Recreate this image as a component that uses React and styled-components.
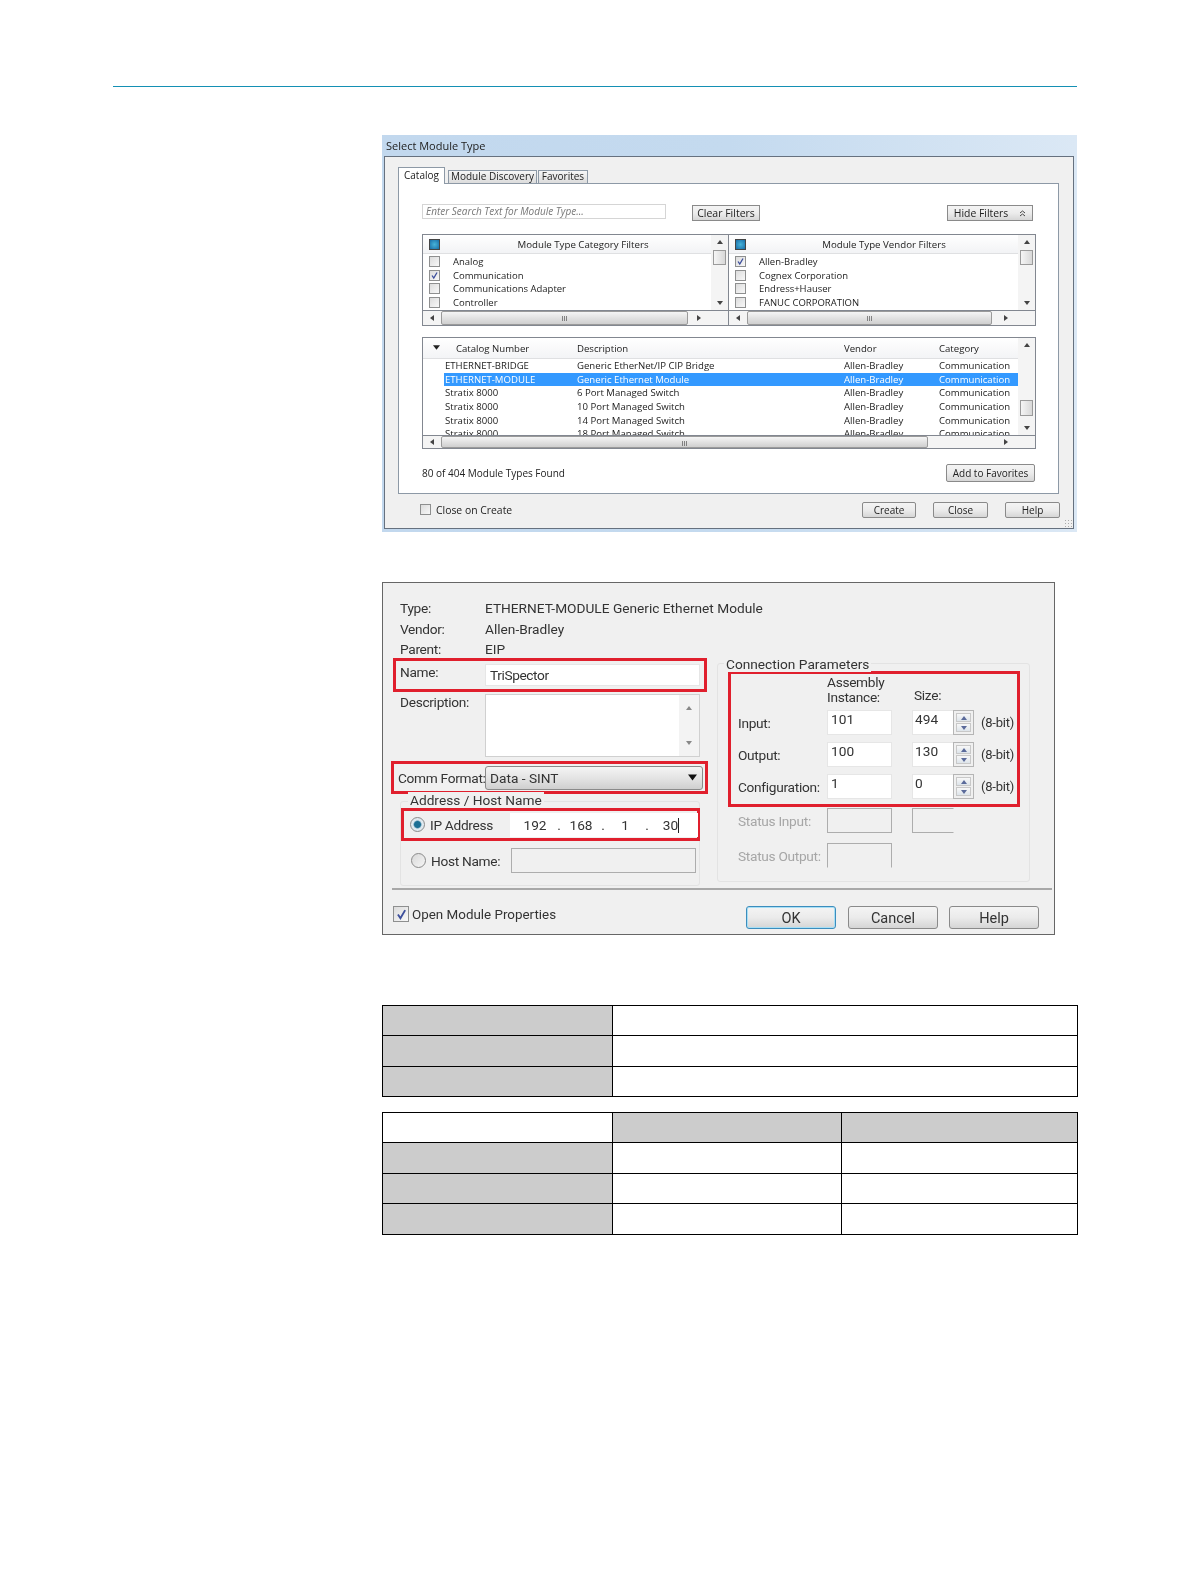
import { Fragment } from 'react';
import styled, { createGlobalStyle } from 'styled-components';

const GlobalStyle = createGlobalStyle`
    html, body {
        margin: 0;
        padding: 0;
        background: #ffffff;
    }
`;

const Page = styled.div`
    width: 1191px;
    height: 1584px;
    overflow: hidden;
    display: flex;
    flex-direction: column;
    font-family: "Open Sans", "Liberation Sans", sans-serif;
    color: #222;
`;

const Rule = styled.div`
    margin: 86px 114px 0 113px;
    height: 1px;
    background: #1490b4;
`;

const Content = styled.div`
    margin-left: 382px;
    width: 696px;
    display: flex;
    flex-direction: column;
`;

/* ---------- shared bits ---------- */

const Glyph = styled.svg`
    display: block;
    flex: none;
`;

const Tri = ({ dir = 'down', size = 6, color = '#444' }) => {
    const pts = {
        up: '3,1 6,5 0,5',
        down: '0,1 6,1 3,5',
        left: '5,0 5,6 1,3',
        right: '1,0 1,6 5,3',
    };
    return (
        <Glyph width={size} height={size} viewBox="0 0 6 6">
            <polygon points={pts[dir]} fill={color} />
        </Glyph>
    );
};

const CheckMark = ({ size = 11 }) => (
    <Glyph width={size} height={size} viewBox="0 0 11 11">
        <path d="M2.5 5.5 L4.6 8.6 L8.6 1.8" fill="none" stroke="#3d4f9c" strokeWidth="1.6" />
    </Glyph>
);

const DoubleChevron = () => (
    <Glyph width={7} height={7} viewBox="0 0 7 7">
        <path d="M1 3 L3.5 1 L6 3 M1 6 L3.5 4 L6 6" fill="none" stroke="#444" strokeWidth="1" />
    </Glyph>
);

const Box = styled.span`
    flex: none;
    width: ${(p) => p.$size || 11}px;
    height: ${(p) => p.$size || 11}px;
    box-sizing: border-box;
    border: 1px solid #8e8f8f;
    background: linear-gradient(135deg, #dcdcdc, #f8f8f8);
    display: flex;
    align-items: center;
    justify-content: center;
`;

/* ---------- first dialog ---------- */

const SelectDialog = styled.div`
    margin-top: 48px;
    width: 695px;
    height: 397px;
    display: flex;
    flex-direction: column;
    background: linear-gradient(90deg, #c2d8ee 0%, #c4daef 50%, #dbe8f5 100%);
    filter: blur(0.35px);
`;

const TitleBar = styled.div`
    height: 21px;
    padding-left: 4px;
    display: flex;
    align-items: center;
    font-size: 11px;
    color: #222;
`;

const Frame = styled.div`
    flex: 1;
    position: relative;
    margin: 0 3px 3px 2px;
    border: 1px solid #66717f;
    background: #f0f0f0;
    display: flex;
    flex-direction: column;
    padding: 11px 14px 0 13px;
    font-size: 10px;
`;

const TabRow = styled.div`
    display: flex;
    align-items: flex-end;
    height: 16px;
    position: relative;
    z-index: 1;
    margin-bottom: -1px;
    gap: 1px;
`;

const Tab = styled.div`
    box-sizing: border-box;
    width: ${(p) => p.$w}px;
    height: ${(p) => (p.$active ? 17 : 14)}px;
    margin-right: ${(p) => (p.$active ? 2 : 0)}px;
    padding-bottom: 2px;
    border: 1px solid #8d99a6;
    border-bottom: ${(p) => (p.$active ? 'none' : '1px solid #8d99a6')};
    background: ${(p) => (p.$active ? '#ffffff' : 'linear-gradient(#f6f6f6, #dcdcdc)')};
    display: flex;
    align-items: center;
    justify-content: center;
    font-size: 10px;
    white-space: nowrap;
`;

const TabPanel = styled.div`
    height: 311px;
    box-sizing: border-box;
    border: 1px solid #8d99a6;
    background: #ffffff;
    padding: 20px 22px 0 23px;
    display: flex;
    flex-direction: column;
`;

const Toolbar = styled.div`
    height: 16px;
    display: flex;
    align-items: center;
`;

const Search = styled.div`
    width: 244px;
    height: 15px;
    margin-bottom: 1px;
    box-sizing: border-box;
    border: 1px solid #d5d5d5;
    padding-left: 3px;
    font-style: italic;
    font-size: 10px;
    line-height: 13px;
    color: #777;
`;

const SmallButton = styled.div`
    flex: none;
    box-sizing: border-box;
    width: ${(p) => p.$w}px;
    height: ${(p) => p.$h || 16}px;
    margin-left: ${(p) => (p.$auto ? 'auto' : `${p.$ml || 0}px`)};
    margin-right: ${(p) => p.$mr || 0}px;
    border: 1px solid #8a8a8a;
    border-radius: ${(p) => p.$r || 0}px;
    background: linear-gradient(#f4f4f4 0%, #ececec 50%, #d6d6d6 100%);
    display: flex;
    align-items: center;
    justify-content: center;
    font-size: ${(p) => p.$fs || 10}px;
    white-space: nowrap;
`;

const ToolButton = styled(SmallButton)`
    margin-top: 2px;
    gap: 11px;
`;

const FilterGrid = styled.div`
    margin-top: 14px;
    height: 92px;
    box-sizing: border-box;
    border: 1px solid #828790;
    display: grid;
    grid-template-columns: 306px 1fr;
`;

const Pane = styled.div`
    display: grid;
    grid-template-columns: 1fr 17px;
    grid-template-rows: 1fr 15px;
    min-height: 0;
    min-width: 0;
    border-right: ${(p) => (p.$divider ? '1px solid #828790' : 'none')};
`;

const PaneBody = styled.div`
    overflow: hidden;
    min-height: 0;
`;

const PaneHead = styled.div`
    height: 18px;
    margin-bottom: 1px;
    display: flex;
    align-items: center;
    padding-left: 6px;
    background: linear-gradient(#ffffff, #f2f3f5);
    border-bottom: 1px solid #dfe0e2;
`;

const HeadText = styled.div`
    flex: 1;
    text-align: center;
    font-size: 9.7px;
    padding-left: ${(p) => p.$pl}px;
`;

const BlueBox = styled.span`
    flex: none;
    width: 11px;
    height: 11px;
    box-sizing: border-box;
    border: 1px solid #444;
    background: radial-gradient(#47b3d9, #1a6ea8);
`;

const FilterRow = styled.div`
    height: 13.6px;
    display: flex;
    align-items: center;
    gap: 13px;
    padding-left: 6px;
    white-space: nowrap;
    font-size: 9.5px;
`;

const VScroll = styled.div`
    background: #f4f4f4;
    display: flex;
    flex-direction: column;
    align-items: center;
    padding-top: 4px;
    position: relative;
`;

const VThumb = styled.div`
    position: absolute;
    left: 2px;
    right: 2px;
    top: ${(p) => p.$top}px;
    height: ${(p) => p.$h}px;
    border: 1px solid #9a9a9a;
    background: linear-gradient(90deg, #f5f5f5, #d8d8d8);
`;

const VArrow = styled.div`
    position: absolute;
    top: ${(p) => (p.$bottom ? 'auto' : '4px')};
    bottom: ${(p) => (p.$bottom ? '4px' : 'auto')};
`;

const HScroll = styled.div`
    grid-column: 1 / -1;
    background: #f4f4f4;
    border-top: 1px solid #828790;
    display: flex;
    align-items: center;
    padding: 0 26px 0 6px;
    gap: 6px;
`;

const HThumb = styled.div`
    width: ${(p) => p.$w}px;
    height: 100%;
    box-sizing: border-box;
    border: 1px solid #9a9a9a;
    border-radius: 2px;
    background: linear-gradient(#f5f5f5, #cfcfcf);
    text-align: center;
    font-size: 8px;
    line-height: 11px;
    color: #555;
`;

const ArrowEnd = styled.span`
    margin-left: auto;
`;

const CatalogList = styled.div`
    margin-top: 11px;
    height: 112px;
    box-sizing: border-box;
    border: 1px solid #828790;
    display: grid;
    grid-template-columns: 1fr 17px;
    grid-template-rows: 1fr 13px;
    font-size: 9.6px;
`;

const CatalogBody = styled.div`
    overflow: hidden;
    min-height: 0;
`;

const Columns = `
    display: grid;
    grid-template-columns: 128px 267px 95px 1fr;
`;

const CatalogHead = styled.div`
    ${Columns}
    height: 20px;
    padding-left: 22px;
    align-items: center;
    position: relative;
    background: linear-gradient(#ffffff, #f3f4f6);
    border-bottom: 1px solid #dfe0e2;
    font-size: 9.6px;
`;

const SortMark = styled.span`
    position: absolute;
    left: 10px;
    top: 6px;
`;

const HeadCell = styled.div`
    padding-left: ${(p) => p.$pl || 4}px;
`;

const CatalogRow = styled.div`
    ${Columns}
    height: 13.6px;
    margin-left: 21px;
    align-items: center;
    white-space: nowrap;
    padding-left: 1px;
    background: ${(p) => (p.$selected ? '#3399ff' : 'transparent')};
    color: ${(p) => (p.$selected ? '#ffffff' : '#222')};
`;

const StatusRow = styled.div`
    margin-top: 15px;
    height: 18px;
    display: flex;
    align-items: center;
    font-size: 10px;
`;

const Footer = styled.div`
    flex: 1;
    display: flex;
    align-items: center;
    padding: 0 0 3px 22px;
    margin-right: -1px;
    gap: 5px;
    font-size: 10.4px;
`;

const Grip = styled.span`
    position: absolute;
    right: 1px;
    bottom: 1px;
    width: 8px;
    height: 8px;
    background: radial-gradient(#aaa 35%, transparent 40%) 0 0 / 3px 3px;
`;

/* ---------- second dialog ---------- */

const PropsDialog = styled.div`
    margin-top: 50px;
    width: 673px;
    height: 353px;
    box-sizing: border-box;
    border: 1px solid #666;
    background: #f0f0f0;
    display: flex;
    flex-direction: column;
    font-family: Roboto, "Open Sans", sans-serif;
    font-size: 13.7px;
    color: #333;
    filter: blur(0.35px);
`;

const InfoBlock = styled.div`
    padding: 15px 0 0 17px;
    height: 60px;
    box-sizing: border-box;
    flex: none;
`;

const InfoRow = styled.div`
    display: flex;
    height: 20.5px;
    align-items: center;
`;

const LabelCol = styled.div`
    flex: none;
    width: ${(p) => p.$w || 85}px;
    margin-left: ${(p) => p.$ml || 0}px;
    margin-bottom: ${(p) => p.$mb || 0}px;
    white-space: nowrap;
    letter-spacing: -0.3px;
`;

const Columns2 = styled.div`
    flex: 1;
    display: flex;
    min-height: 0;
`;

const LeftCol = styled.div`
    width: 334px;
    padding-left: 10px;
    box-sizing: border-box;
    display: flex;
    flex-direction: column;
`;

const RedRow = styled.div`
    box-sizing: border-box;
    border: 3px solid #e01f2d;
    height: ${(p) => p.$h}px;
    width: ${(p) => p.$w}px;
    margin-left: ${(p) => p.$ml || 0}px;
    margin-top: ${(p) => p.$mt || 0}px;
    padding-left: ${(p) => p.$pl || 4}px;
    display: flex;
    align-items: center;
    flex: none;
`;

const Input = styled.div`
    box-sizing: border-box;
    width: ${(p) => p.$w}px;
    height: ${(p) => p.$h}px;
    background: ${(p) => (p.$disabled ? '#f0f0f0' : '#ffffff')};
    border: 1px solid ${(p) => (p.$disabled ? '#adadad' : '#e6e6e6')};
    border-right-color: ${(p) => (p.$openRight ? 'transparent' : undefined)};
    border-bottom-color: ${(p) => (p.$openBottom ? 'transparent' : undefined)};
    padding-left: ${(p) => p.$pl || 4}px;
    display: flex;
    align-items: ${(p) => p.$align || 'center'};
    flex: none;
    white-space: nowrap;
`;

const NameInput = styled(Input)`
    letter-spacing: -0.4px;
`;

const DescRow = styled.div`
    margin-top: 2px;
    padding-left: 7px;
    height: 63px;
    display: flex;
    flex: none;
`;

const DescLabel = styled(LabelCol)`
    line-height: 17px;
`;

const TextArea = styled.div`
    width: 215px;
    height: 63px;
    box-sizing: border-box;
    background: #ffffff;
    border: 1px solid #d0d0d0;
    display: flex;
    justify-content: flex-end;
`;

const AreaScroll = styled.div`
    width: 20px;
    background: #f3f3f3;
    display: flex;
    flex-direction: column;
    align-items: center;
    justify-content: space-between;
    padding: 10px 0;
`;

const Select = styled.div`
    box-sizing: border-box;
    width: 218px;
    height: 24px;
    border: 1px solid #8a8a8a;
    border-radius: 3px;
    background: linear-gradient(#f4f4f4, #e4e4e4 50%, #cfcfcf);
    padding: 0 5px 0 4px;
    display: flex;
    align-items: center;
    justify-content: space-between;
`;

const GroupLegend = styled.div`
    position: absolute;
    top: ${(p) => p.$top || -7}px;
    left: ${(p) => p.$left}px;
    padding: 0 2px;
    background: #f0f0f0;
    line-height: 16px;
    white-space: nowrap;
`;

const AddressGroup = styled.div`
    position: relative;
    margin: 7px 0 0 7px;
    width: 300px;
    height: 85px;
    box-sizing: border-box;
    border: 1px solid #e3e3e3;
    border-radius: 3px;
`;

const AddressBody = styled.div`
    position: relative;
    padding-top: 6px;
`;

const RadioDot = styled.span`
    flex: none;
    width: 15px;
    height: 15px;
    box-sizing: border-box;
    border-radius: 50%;
    border: 1px solid #8a8a8a;
    background: ${(p) => (p.$on
        ? 'radial-gradient(circle, #1c6f94 0 3px, #dfe9ef 4.5px)'
        : 'linear-gradient(135deg, #d8d8d8, #f6f6f6)')};
`;

const IpFields = styled.div`
    margin-left: auto;
    width: 188px;
    height: 24px;
    background: #fff;
    display: grid;
    grid-template-columns: 12px 26px 22px 22px 22px 22px 22px 26px;
    align-items: center;
    justify-items: center;
    margin-right: -1px;
`;

const Caret = styled.span`
    display: inline-block;
    width: 1px;
    height: 15px;
    background: #222;
    vertical-align: -3px;
`;

const HostRow = styled.div`
    display: flex;
    align-items: center;
    gap: 5px;
    margin-top: 7px;
    padding-left: 10px;
    height: 25px;
`;

const RightCol = styled.div`
    flex: 1;
    position: relative;
`;

const ConnGroup = styled.div`
    position: relative;
    margin: 20px 0 0 0;
    width: 313px;
    height: 219px;
    box-sizing: border-box;
    border: 1px solid #e3e3e3;
    border-radius: 3px;
`;

const RedGrid = styled.div`
    box-sizing: border-box;
    margin: 7px 0 0 10px;
    width: 292px;
    height: 136px;
    border: 3px solid #e01f2d;
    padding: 0 0 0 7px;
    display: grid;
    grid-template-columns: 89px 65px 20px 41px 21px auto;
    grid-template-rows: 29px 25px 25px 25px;
    row-gap: 7px;
    align-items: center;
`;

const HeaderCell = styled.div`
    grid-column: ${(p) => p.$col};
    line-height: 15px;
    align-self: start;
    margin-top: ${(p) => p.$mt || 0}px;
    padding-left: ${(p) => p.$pl || 0}px;
    white-space: nowrap;
    letter-spacing: -0.3px;
`;

const ParamLabel = styled.div`
    grid-column: 1;
    white-space: nowrap;
    letter-spacing: -0.3px;
`;

const Spinner = styled.div`
    box-sizing: border-box;
    width: 21px;
    height: 25px;
    border: 1px solid #b5b5b5;
    background: #f0f0f0;
    padding: 2px;
    display: flex;
    flex-direction: column;
    gap: 1px;
`;

const SpinBtn = styled.div`
    flex: 1;
    background: linear-gradient(#f8f8f8, #dde4ea);
    border: 1px solid #c8c8c8;
    display: flex;
    align-items: center;
    justify-content: center;
`;

const Unit = styled.div`
    padding-left: 7px;
    white-space: nowrap;
    font-size: 13px;
    letter-spacing: -0.2px;
`;

const StatusGrid = styled.div`
    margin: 1px 0 0 20px;
    display: grid;
    grid-template-columns: 89px 65px 20px 42px;
    grid-template-rows: 25px 25px;
    row-gap: 10px;
    align-items: center;
    white-space: nowrap;
    letter-spacing: -0.3px;
    color: #a6a6a6;
`;

const Divider = styled.div`
    flex: none;
    height: 2px;
    margin: 0 2px 0 9px;
    background: #a8a8a8;
`;

const DialogFooter = styled.div`
    flex: none;
    height: 44px;
    display: flex;
    padding: 0 15px 0 10px;
`;

const CheckLabel = styled.div`
    display: flex;
    align-items: center;
    gap: 3px;
    height: 24px;
    margin-top: 12px;
    font-size: 13.4px;
    white-space: nowrap;
`;

const WinButton = styled.div`
    flex: none;
    box-sizing: border-box;
    width: 90px;
    height: 23px;
    margin: 16px 0 0 ${(p) => (p.$auto ? 'auto' : `${p.$ml}px`)};
    padding-top: 2px;
    border: 1px solid ${(p) => (p.$primary ? '#3c8dbd' : '#8a8a8a')};
    box-shadow: ${(p) => (p.$primary ? 'inset 0 0 0 1px #a8dff5' : 'none')};
    border-radius: 3px;
    background: linear-gradient(#f4f4f4, #ebebeb 50%, #d5d5d5);
    display: flex;
    align-items: center;
    justify-content: center;
    font-size: 14.5px;
`;

/* ---------- blank tables ---------- */

const Table = styled.table`
    width: 696px;
    margin-top: ${(p) => p.$mt}px;
    border-collapse: collapse;
    table-layout: fixed;
`;

const Col = styled.col`
    width: ${(p) => p.$w}px;
`;

const Cell = styled.td`
    height: ${(p) => p.$h}px;
    padding: 0;
    border: 1px solid #000;
    background: ${(p) => (p.$grey ? '#cccccc' : '#ffffff')};
`;

const filters = [
    { head: 'Module Type Category Filters', pad: 15, items: [['Analog'], ['Communication', true], ['Communications Adapter'], ['Controller']], hthumb: 247 },
    { head: 'Module Type Vendor Filters', pad: 4, items: [['Allen-Bradley', true], ['Cognex Corporation'], ['Endress+Hauser'], ['FANUC CORPORATION']], hthumb: 245 },
];

const catalog = [
    ['ETHERNET-BRIDGE', 'Generic EtherNet/IP CIP Bridge', 'Allen-Bradley', 'Communication'],
    ['ETHERNET-MODULE', 'Generic Ethernet Module', 'Allen-Bradley', 'Communication', true],
    ['Stratix 8000', '6 Port Managed Switch', 'Allen-Bradley', 'Communication'],
    ['Stratix 8000', '10 Port Managed Switch', 'Allen-Bradley', 'Communication'],
    ['Stratix 8000', '14 Port Managed Switch', 'Allen-Bradley', 'Communication'],
    ['Stratix 8000', '18 Port Managed Switch', 'Allen-Bradley', 'Communication'],
];

const params = [
    ['Input:', '101', '494'],
    ['Output:', '100', '130'],
    ['Configuration:', '1', '0'],
];

function SpinField({ value }) {
    return (
        <>
            <Input $w={42} $h={25} $pl={2} $align="flex-start">{value}</Input>
            <Spinner>
                <SpinBtn><Tri dir="up" size={6} color="#5a6a9a" /></SpinBtn>
                <SpinBtn><Tri dir="down" size={6} color="#5a6a9a" /></SpinBtn>
            </Spinner>
        </>
    );
}

function FilterPane({ pane, divider }) {
    return (
        <Pane $divider={divider}>
            <PaneBody>
                <PaneHead>
                    <BlueBox />
                    <HeadText $pl={pane.pad}>{pane.head}</HeadText>
                </PaneHead>
                {pane.items.map(([label, checked]) => (
                    <FilterRow key={label}>
                        <Box>{checked && <CheckMark size={9} />}</Box>
                        {label}
                    </FilterRow>
                ))}
            </PaneBody>
            <VScroll>
                <VArrow><Tri dir="up" /></VArrow>
                <VThumb $top={15} $h={13} />
                <VArrow $bottom><Tri dir="down" /></VArrow>
            </VScroll>
            <HScroll>
                <Tri dir="left" />
                <HThumb $w={pane.hthumb}>III</HThumb>
                <ArrowEnd><Tri dir="right" /></ArrowEnd>
            </HScroll>
        </Pane>
    );
}

export default function App() {
    return (
        <Page>
            <GlobalStyle />
            <Rule />
            <Content>
                <SelectDialog>
                    <TitleBar>Select Module Type</TitleBar>
                    <Frame>
                        <TabRow>
                            <Tab $w={47} $active>Catalog</Tab>
                            <Tab $w={89}>Module Discovery</Tab>
                            <Tab $w={50}>Favorites</Tab>
                        </TabRow>
                        <TabPanel>
                            <Toolbar>
                                <Search>Enter Search Text for Module Type...</Search>
                                <ToolButton $w={68} $ml={26} $fs={10.5}>Clear Filters</ToolButton>
                                <ToolButton $w={86} $auto $mr={3} $fs={10.4}>Hide Filters<DoubleChevron /></ToolButton>
                            </Toolbar>
                            <FilterGrid>
                                {filters.map((pane, i) => (
                                    <FilterPane key={pane.head} pane={pane} divider={i === 0} />
                                ))}
                            </FilterGrid>
                            <CatalogList>
                                <CatalogBody>
                                    <CatalogHead>
                                        <SortMark><Tri dir="down" size={7} color="#222" /></SortMark>
                                        <HeadCell $pl={11}>Catalog Number</HeadCell>
                                        <HeadCell>Description</HeadCell>
                                        <HeadCell>Vendor</HeadCell>
                                        <HeadCell>Category</HeadCell>
                                    </CatalogHead>
                                    {catalog.map(([num, desc, vendor, cat, selected]) => (
                                        <CatalogRow key={desc} $selected={selected}>
                                            <div>{num}</div>
                                            <HeadCell>{desc}</HeadCell>
                                            <HeadCell>{vendor}</HeadCell>
                                            <HeadCell>{cat}</HeadCell>
                                        </CatalogRow>
                                    ))}
                                </CatalogBody>
                                <VScroll>
                                    <VArrow><Tri dir="up" /></VArrow>
                                    <VThumb $top={62} $h={14} />
                                    <VArrow $bottom><Tri dir="down" /></VArrow>
                                </VScroll>
                                <HScroll>
                                    <Tri dir="left" />
                                    <HThumb $w={487}>III</HThumb>
                                    <ArrowEnd><Tri dir="right" /></ArrowEnd>
                                </HScroll>
                            </CatalogList>
                            <StatusRow>
                                80 of 404 Module Types Found
                                <SmallButton $w={89} $h={18} $auto $mr={1} $r={2}>Add to Favorites</SmallButton>
                            </StatusRow>
                        </TabPanel>
                        <Footer>
                            <Box />
                            Close on Create
                            <SmallButton $w={54} $r={2} $auto>Create</SmallButton>
                            <SmallButton $w={55} $r={2} $ml={12}>Close</SmallButton>
                            <SmallButton $w={55} $r={2} $ml={12}>Help</SmallButton>
                        </Footer>
                        <Grip />
                    </Frame>
                </SelectDialog>

                <PropsDialog>
                    <InfoBlock>
                        <InfoRow><LabelCol>Type:</LabelCol>ETHERNET-MODULE Generic Ethernet Module</InfoRow>
                        <InfoRow><LabelCol>Vendor:</LabelCol>Allen-Bradley</InfoRow>
                        <InfoRow><LabelCol>Parent:</LabelCol>EIP</InfoRow>
                    </InfoBlock>
                    <Columns2>
                        <LeftCol>
                            <RedRow $h={34} $w={314} $mt={15}>
                                <LabelCol $w={85} $mb={7}>Name:</LabelCol>
                                <NameInput $w={215} $h={22}>TriSpector</NameInput>
                            </RedRow>
                            <DescRow>
                                <DescLabel>Description:</DescLabel>
                                <TextArea>
                                    <AreaScroll>
                                        <Tri dir="up" color="#888" />
                                        <Tri dir="down" color="#888" />
                                    </AreaScroll>
                                </TextArea>
                            </DescRow>
                            <RedRow $h={33} $w={317} $ml={-2} $mt={4} $pl={4}>
                                <LabelCol $w={87}>Comm Format:</LabelCol>
                                <Select>Data - SINT<Tri dir="down" size={9} color="#111" /></Select>
                            </RedRow>
                            <AddressGroup>
                                <GroupLegend $left={7} $top={-10}>Address / Host Name</GroupLegend>
                                <AddressBody>
                                    <RedRow $h={33} $w={299} $pl={6}>
                                        <RadioDot $on />
                                        <LabelCol $w={76} $ml={5}>IP Address</LabelCol>
                                        <IpFields>
                                            <span />
                                            <span>192</span><span>.</span><span>168</span><span>.</span><span>1</span><span>.</span>
                                            <span>30<Caret /></span>
                                        </IpFields>
                                    </RedRow>
                                    <HostRow>
                                        <RadioDot />
                                        <LabelCol $w={75}>Host Name:</LabelCol>
                                        <Input $w={185} $h={25} $disabled />
                                    </HostRow>
                                </AddressBody>
                            </AddressGroup>
                        </LeftCol>
                        <RightCol>
                            <ConnGroup>
                                <GroupLegend $left={6} $top={-8}>Connection Parameters</GroupLegend>
                                <RedGrid>
                                    <HeaderCell $col="2 / span 2" $mt={1}>Assembly<br />Instance:</HeaderCell>
                                    <HeaderCell $col="4 / span 2" $mt={14} $pl={2}>Size:</HeaderCell>
                                    {params.map(([label, inst, size]) => (
                                        <Fragment key={label}>
                                            <ParamLabel>{label}</ParamLabel>
                                            <Input $w={65} $h={25} $pl={3} $align="flex-start">{inst}</Input>
                                            <span />
                                            <SpinField value={size} />
                                            <Unit>(8-bit)</Unit>
                                        </Fragment>
                                    ))}
                                </RedGrid>
                                <StatusGrid>
                                    <div>Status Input:</div>
                                    <Input $w={65} $h={25} $disabled />
                                    <span />
                                    <Input $w={42} $h={25} $disabled $openRight />
                                    <div>Status Output:</div>
                                    <Input $w={65} $h={25} $disabled $openBottom />
                                </StatusGrid>
                            </ConnGroup>
                        </RightCol>
                    </Columns2>
                    <Divider />
                    <DialogFooter>
                        <CheckLabel>
                            <Box $size={16}><CheckMark size={13} /></Box>
                            Open Module Properties
                        </CheckLabel>
                        <WinButton $primary $auto>OK</WinButton>
                        <WinButton $ml={12}>Cancel</WinButton>
                        <WinButton $ml={11}>Help</WinButton>
                    </DialogFooter>
                </PropsDialog>

                <Table $mt={70}>
                    <colgroup>
                        <Col $w={230} />
                        <col />
                    </colgroup>
                    <tbody>
                        {[29, 30, 29].map((h, r) => (
                            <tr key={r}><Cell $grey $h={h} /><Cell $h={h} /></tr>
                        ))}
                    </tbody>
                </Table>

                <Table $mt={15}>
                    <colgroup>
                        <Col $w={230} />
                        <Col $w={229} />
                        <col />
                    </colgroup>
                    <tbody>
                        <tr><Cell $h={29} /><Cell $grey $h={29} /><Cell $grey $h={29} /></tr>
                        {[30, 29, 30].map((h, r) => (
                            <tr key={r}><Cell $grey $h={h} /><Cell $h={h} /><Cell $h={h} /></tr>
                        ))}
                    </tbody>
                </Table>
            </Content>
        </Page>
    );
}
